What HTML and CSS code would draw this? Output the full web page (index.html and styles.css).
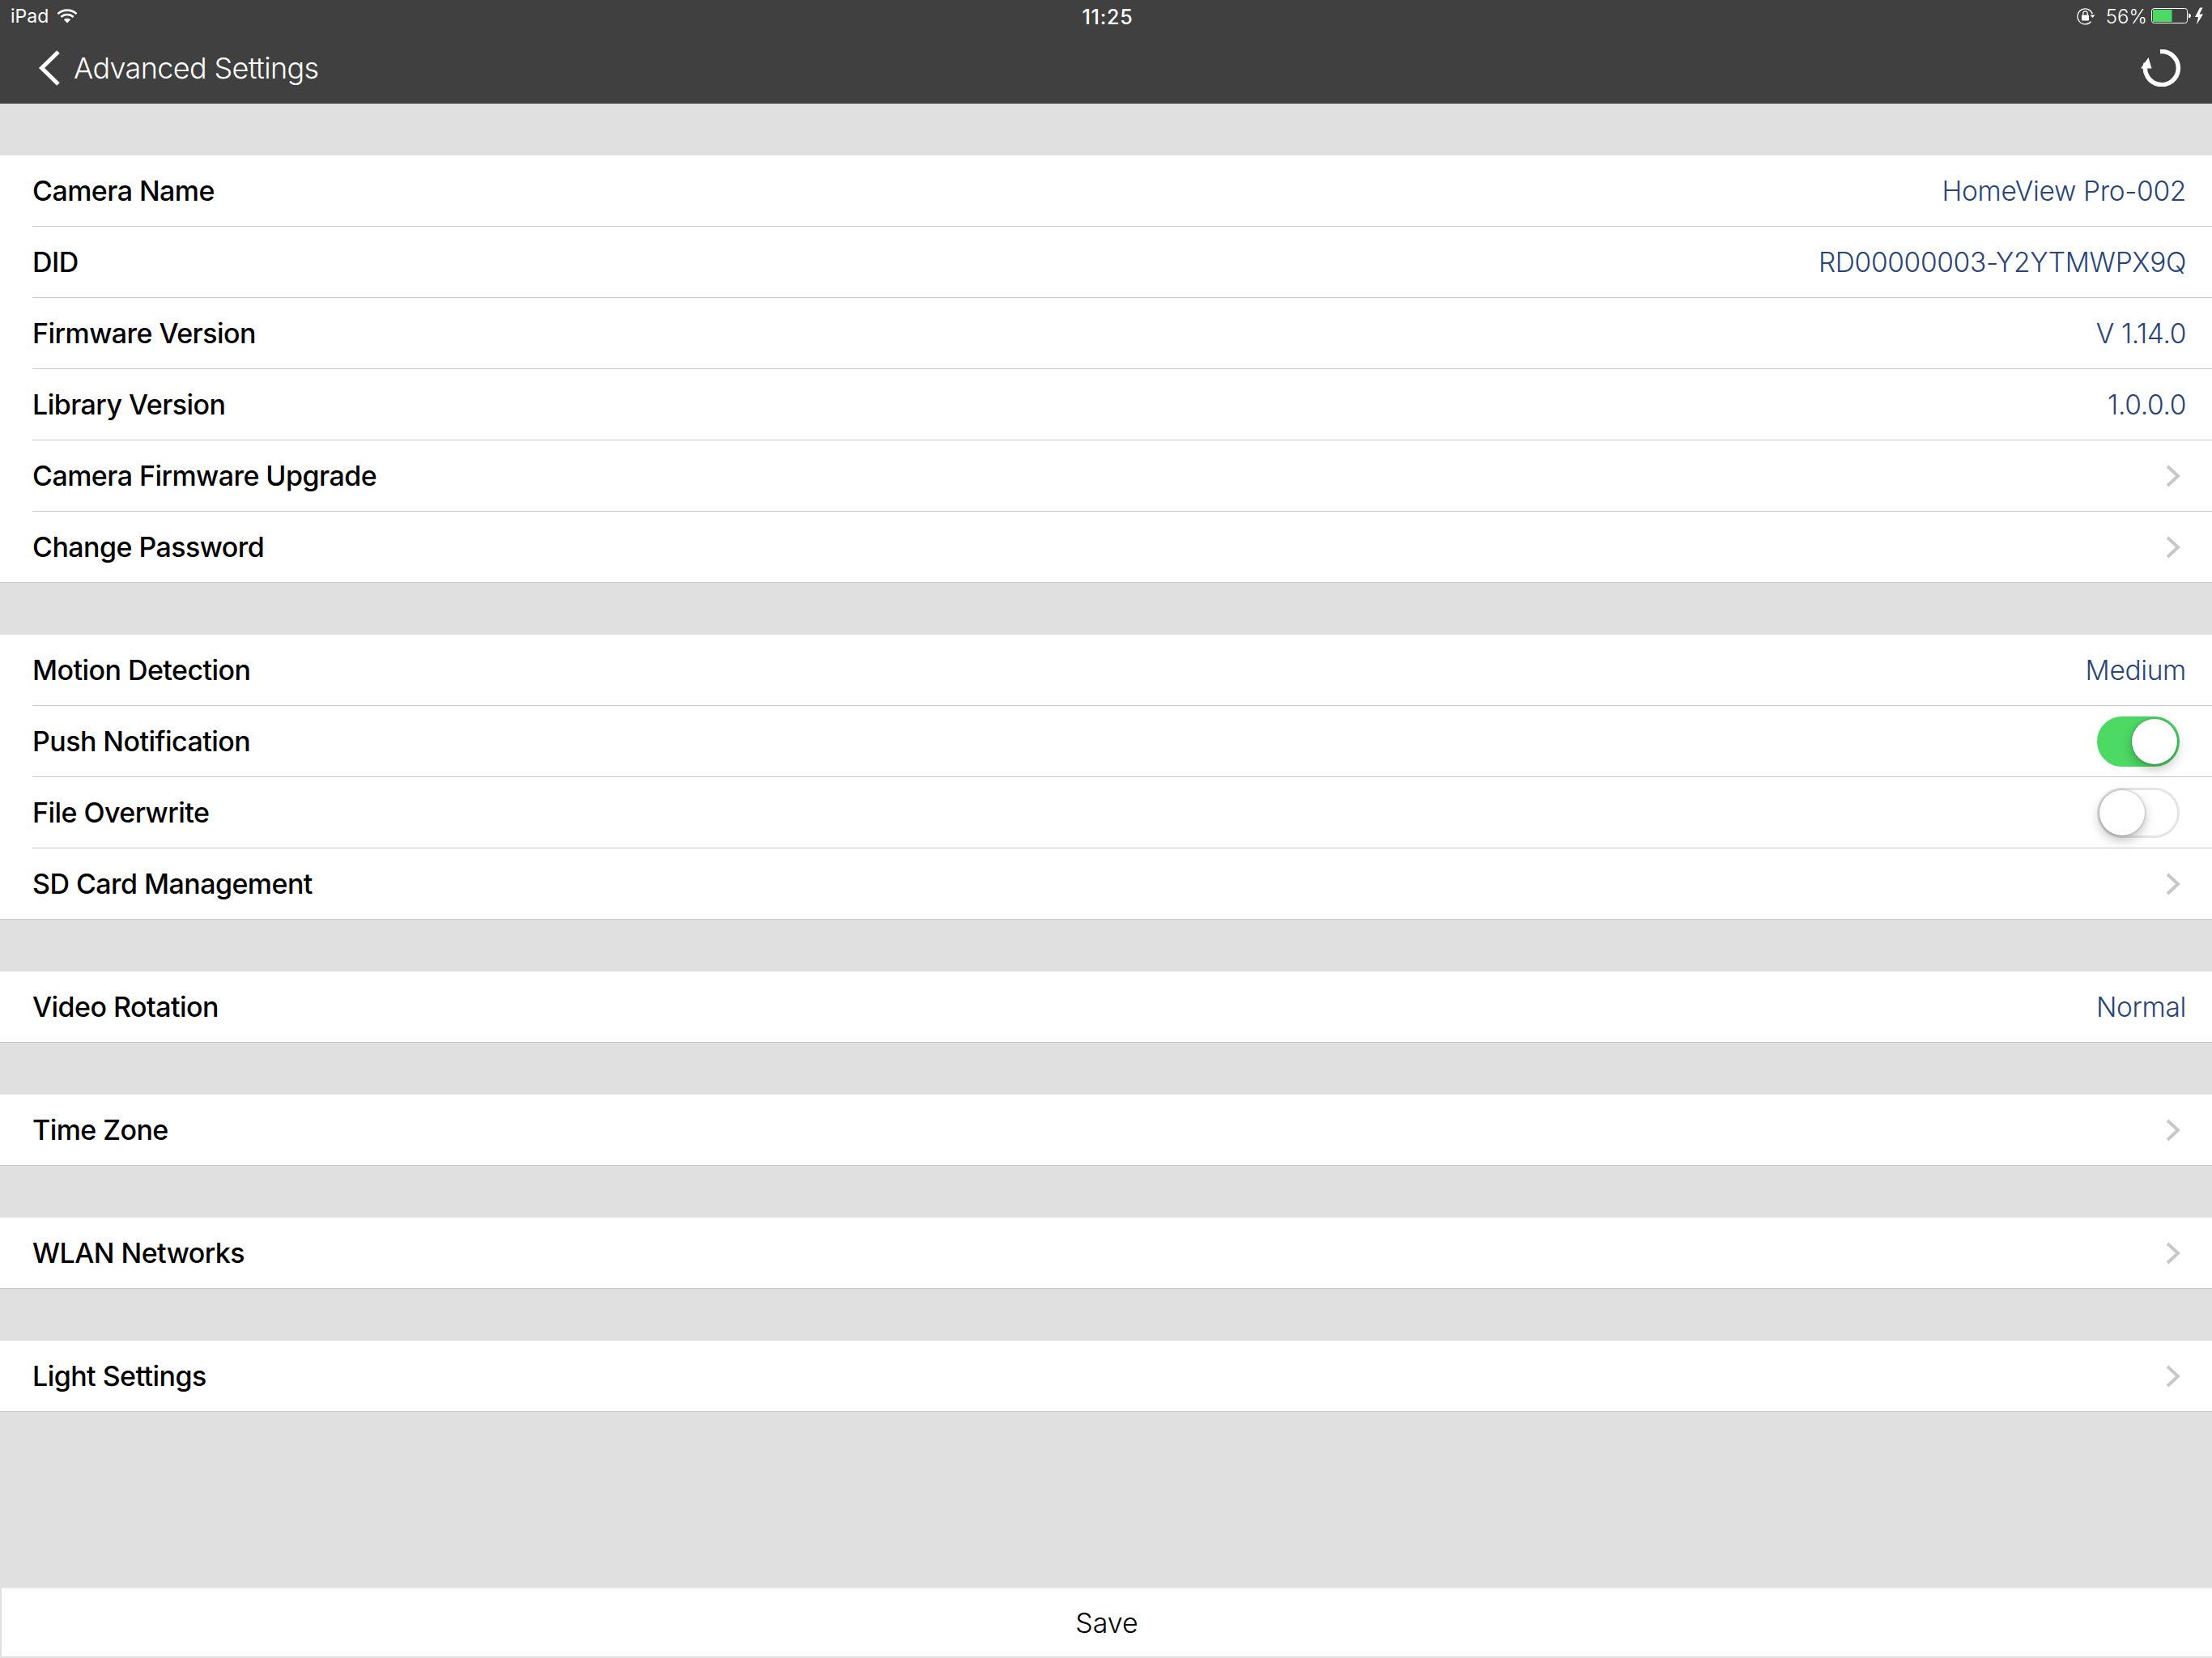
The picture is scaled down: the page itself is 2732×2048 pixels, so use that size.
FILE: index.html
```html
<!DOCTYPE html>
<html lang="en">
<head>
<meta charset="utf-8">
<title>Advanced Settings</title>
<link rel="stylesheet" href="styles.css">
</head>
<body>
<div class="page">
  <header class="header">
    <div class="status">
      <div class="status-left">
        <span>iPad</span>
        <svg class="wifi" width="26" height="20" viewBox="0 0 26 20"><path d="M1.500 7.200C4.500 4.200 8.500 2.600 13 2.600s8.500 1.600 11.500 4.600" fill="none" stroke="#fff" stroke-width="2.600"/><path d="M5.300 11C7.300 9 10 8 13 8s5.700 1 7.700 3" fill="none" stroke="#fff" stroke-width="2.600"/><path d="M8.900 14.300C10 13.300 11.400 12.800 13 12.800s3 .5 4.100 1.500L13 18.600z" fill="#fff"/></svg>
      </div>
      <div class="status-time">11:25</div>
      <div class="status-right">
        <svg class="lock" width="24" height="22" viewBox="0 0 24 22"><path d="M17.500 17.700A9.500 9.500 0 1 1 19.300 8" fill="none" stroke="#fff" stroke-width="1.300"/><path d="M16.500 9.500h6l-3 3.500z" fill="#fff"/><rect x="6" y="9.500" width="9" height="7" rx="1" fill="#fff"/><path d="M7.800 9.500V7.500a2.700 2.700 0 0 1 5.400 0v2" fill="none" stroke="#fff" stroke-width="1.300"/></svg>
        <span class="pct">56%</span>
        <svg class="battery" width="66" height="22" viewBox="0 0 66 22"><rect x=".5" y="1.500" width="44" height="18" rx="3" fill="none" stroke="#fff"/><rect x="2" y="3" width="23.500" height="15" fill="#4cd964"/><path d="M46 7.500c1.800.3 3 1.500 3 3s-1.200 2.700-3 3z" fill="#fff"/><path d="M60 .5 54 12h4l-2 9.500L64 8.500h-4.500L63.500 .5z" fill="#fff"/></svg>
      </div>
    </div>
    <div class="nav">
      <svg class="back" width="32" height="46" viewBox="0 0 32 46"><path d="M28 3 7.500 23 28 43" fill="none" stroke="#fff" stroke-width="5"/></svg>
      <h1 class="title">Advanced Settings</h1>
      <svg class="reload" width="50" height="46" viewBox="0 0 50 46"><path d="M24 2.700A20.500 20.500 0 1 1 6.300 17" fill="none" stroke="#fff" stroke-width="5.500"/><path d="M0 23.500 9.500 10l4 13.500z" fill="#fff"/></svg>
    </div>
  </header>

  <main class="groups">
    <section class="group">
      <div class="row"><span class="label">Camera Name</span><span class="value">HomeView Pro-002</span></div>
      <div class="row"><span class="label">DID</span><span class="value">RD00000003-Y2YTMWPX9Q</span></div>
      <div class="row"><span class="label">Firmware Version</span><span class="value">V 1.14.0</span></div>
      <div class="row"><span class="label">Library Version</span><span class="value">1.0.0.0</span></div>
      <div class="row"><span class="label">Camera Firmware Upgrade</span><svg class="chev" width="18" height="28" viewBox="0 0 18 28"><path d="M2 2l13 12L2 26" fill="none" stroke="#c7c7cc" stroke-width="4"/></svg></div>
      <div class="row last"><span class="label">Change Password</span><svg class="chev" width="18" height="28" viewBox="0 0 18 28"><path d="M2 2l13 12L2 26" fill="none" stroke="#c7c7cc" stroke-width="4"/></svg></div>
    </section>
    <section class="group">
      <div class="row"><span class="label">Motion Detection</span><span class="value">Medium</span></div>
      <div class="row"><span class="label">Push Notification</span><span class="switch on"><span class="knob"></span></span></div>
      <div class="row"><span class="label">File Overwrite</span><span class="switch"><span class="knob"></span></span></div>
      <div class="row last"><span class="label">SD Card Management</span><svg class="chev" width="18" height="28" viewBox="0 0 18 28"><path d="M2 2l13 12L2 26" fill="none" stroke="#c7c7cc" stroke-width="4"/></svg></div>
    </section>
    <section class="group">
      <div class="row last"><span class="label">Video Rotation</span><span class="value">Normal</span></div>
    </section>
    <section class="group">
      <div class="row last"><span class="label">Time Zone</span><svg class="chev" width="18" height="28" viewBox="0 0 18 28"><path d="M2 2l13 12L2 26" fill="none" stroke="#c7c7cc" stroke-width="4"/></svg></div>
    </section>
    <section class="group">
      <div class="row last"><span class="label">WLAN Networks</span><svg class="chev" width="18" height="28" viewBox="0 0 18 28"><path d="M2 2l13 12L2 26" fill="none" stroke="#c7c7cc" stroke-width="4"/></svg></div>
    </section>
    <section class="group">
      <div class="row last"><span class="label">Light Settings</span><svg class="chev" width="18" height="28" viewBox="0 0 18 28"><path d="M2 2l13 12L2 26" fill="none" stroke="#c7c7cc" stroke-width="4"/></svg></div>
    </section>
  </main>

  <footer class="footer"><button class="save">Save</button></footer>
</div>
</body>
</html>
```
FILE: styles.css
```css
* { box-sizing: border-box; margin: 0; padding: 0; }
html, body { width: 2732px; height: 2048px; overflow: hidden; }
body { background: #e0e0e0; font-family: Inter, "Liberation Sans", sans-serif; color: #000; }
.page { display: flex; flex-direction: column; height: 2048px; }

.header { height: 128px; background: #404040; color: #fff; flex: none; }
.status { height: 40px; display: grid; grid-template-columns: 1fr auto 1fr; align-items: center; padding: 0 9px 0 13px; font-size: 23px; font-weight: 400; }
.status-left { display: flex; align-items: center; gap: 10px; }
.status-time { font-weight: 500; font-size: 25px; letter-spacing: .8px; padding-top: 2px; }
.status-right { display: flex; align-items: center; justify-content: flex-end; gap: 12px; }
.status-right .battery { margin-left: -7px; }
.pct { font-size: 24px; font-weight: 300; }

.nav { height: 88px; display: flex; align-items: center; padding: 0 38px 0 44px; }
.title { font-size: 36px; font-weight: 300; letter-spacing: -.65px; margin-left: 15px; flex: 1; }

.groups { display: flex; flex-direction: column; gap: 64px; padding-top: 64px; flex: none; }
.group { background: #fff; }
.row { height: 88px; display: flex; align-items: center; justify-content: space-between; padding-right: 32px; margin-left: 40px; border-bottom: 1px solid #c8c8c8; }
.row.last { margin-left: 0; padding-left: 40px; }
.label { font-weight: 550; font-size: 34px; letter-spacing: -.55px; }
.value { font-weight: 350; color: #2a4478; font-size: 33.500px; letter-spacing: -.35px; }
.chev { margin-right: 7px; }

.switch { width: 102px; height: 62px; border-radius: 31px; border: 3px solid #e5e5e5; background: #fff; display: flex; margin-right: 8px; }
.switch.on { background: #4cd964; border-color: #4cd964; justify-content: flex-end; }
.knob { width: 56px; height: 56px; border-radius: 50%; background: #fff; box-shadow: 0 6px 14px rgba(0,0,0,.25), 0 0 3px rgba(0,0,0,.35); }

.footer { margin-top: auto; padding: 0 0 2px 2px; }
.save { display: block; width: 100%; height: 84px; border: 0; background: #fff; font: 350 34px Inter, "Liberation Sans", sans-serif; color: #000; box-shadow: 0 -2px 0 #e6e6e6; }
```
